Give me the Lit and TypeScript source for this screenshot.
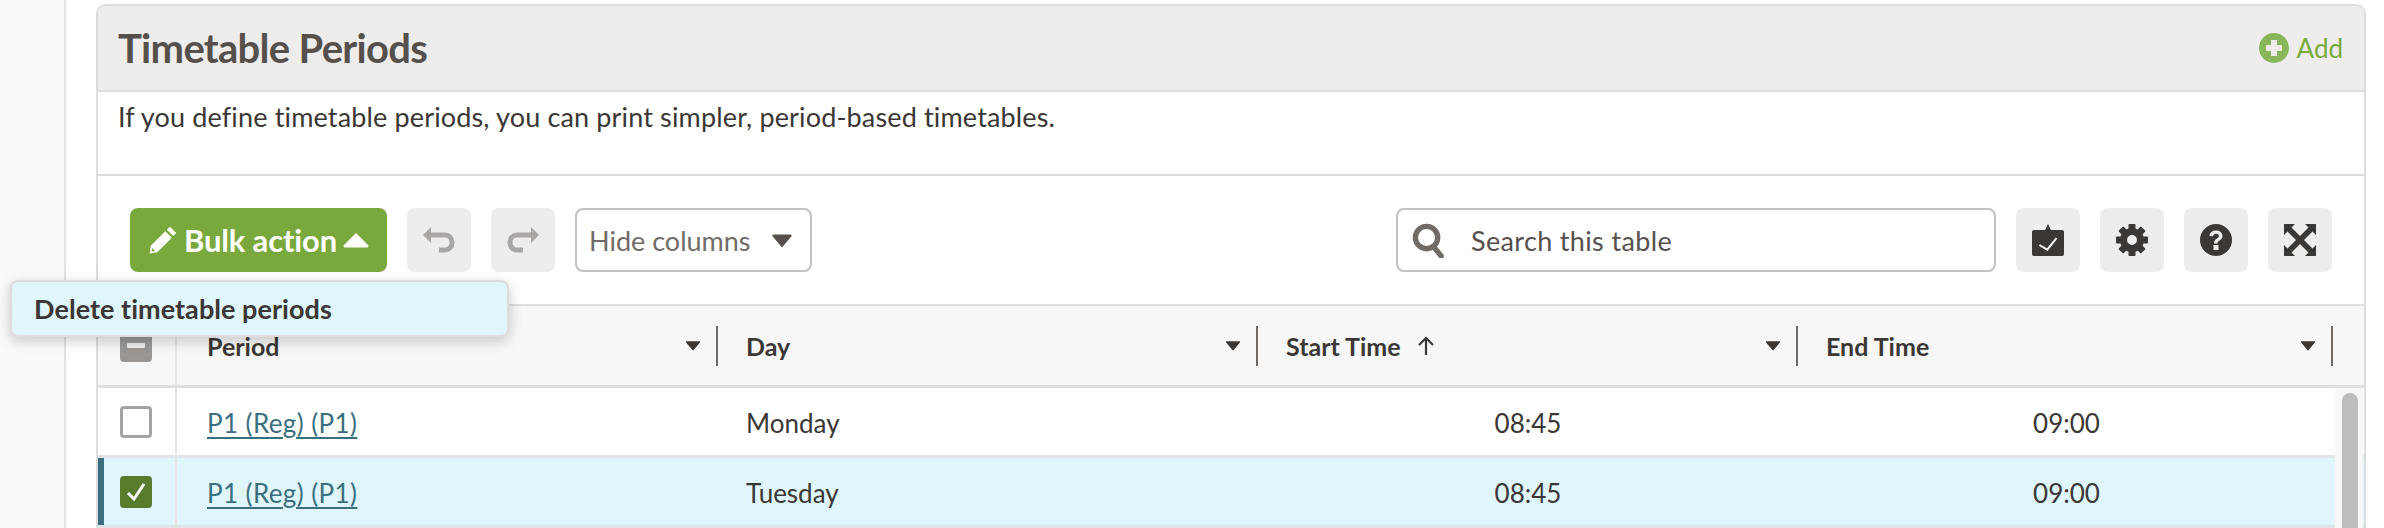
import { LitElement, html, css, svg } from "lit";
import { customElement } from "lit/decorators.js";

const caretDown = html`<svg class="caret" viewBox="0 0 20 14"><path d="M2 1.500h16a1 1 0 0 1 .8 1.600l-8 9.600a1 1 0 0 1-1.600 0l-8-9.600A1 1 0 0 1 2 1.500z"/></svg>`;
const gearTeeth = [0, 45, 90, 135, 180, 225, 270, 315].map(
  (a) => svg`<rect x="14.500" y="2" width="7" height="8" rx="1" fill="#3b3735" transform="rotate(${a} 18 18)"/>`
);

@customElement("app-root")
export class AppRoot extends LitElement {
  static styles = css`
    :host { display: flex; width: 2384px; height: 528px; overflow: hidden; background: #fff; font-family: "Lato", "Open Sans", sans-serif; color: #3b3735; position: relative; }
    .side { width: 64px; flex: none; background: #fafafa; border-right: 2px solid #e2e1e0; }
    .main { flex: none; width: 2270px; margin-left: 30px; padding-top: 4px; }
    .card { width: 2270px; box-sizing: border-box; border: 2px solid #dedddc; border-bottom: none; border-radius: 10px 10px 0 0; height: 524px; overflow: hidden; }
    .head { height: 86px; box-sizing: border-box; background: #eeedec; border-bottom: 2px solid #dedddc; display: flex; align-items: center; justify-content: space-between; padding: 0 21px 0 20px; }
    h2 { margin: 0; font-size: 40px; font-weight: 700; color: #56504d; letter-spacing: -0.7px; }
    .add { display: flex; align-items: center; gap: 8px; color: #7aaa3e; font-size: 26px; }
    .add svg { width: 30px; height: 30px; }
    .desc { height: 84px; box-sizing: border-box; border-bottom: 2px solid #dedddc; padding: 7px 20px 0; font-size: 27px; letter-spacing: 0.15px; line-height: 36px; }
    .bar { height: 130px; box-sizing: border-box; padding: 32px 32px 0; display: flex; gap: 20px; border-bottom: 2px solid #e0dfde; }
    .bulk { width: 257px; height: 64px; box-sizing: border-box; background: #79a93d; color: #fff; border-radius: 8px; display: flex; align-items: center; justify-content: center; gap: 6px; font-size: 31px; font-weight: 700; letter-spacing: -0.15px; }
    .bulk .pen { width: 30px; height: 30px; }
    .bulk .up { width: 26px; height: 16px; fill: #fff; }
    .ib { width: 64px; height: 64px; flex: none; background: #eeedec; border-radius: 8px; display: flex; align-items: center; justify-content: center; }
    .ib svg { width: 36px; height: 36px; }
    .ib.off svg { color: #aaa6a4; }
    .sel { width: 237px; height: 64px; box-sizing: border-box; border: 2px solid #c3c2c1; border-radius: 8px; display: flex; align-items: center; justify-content: space-between; padding: 0 17px 0 12px; font-size: 27px; color: #716b68; }
    .sel .caret { width: 22px; height: 15px; fill: #56504d; }
    .search { width: 600px; height: 64px; margin-left: auto; box-sizing: border-box; border: 2px solid #c3c2c1; border-radius: 8px; display: flex; align-items: center; gap: 26px; padding: 0 14px; font-size: 27px; letter-spacing: 0.35px; color: #56504d; }
    .search svg { width: 33px; height: 35px; flex: none; }
    .tools { display: flex; gap: 20px; }
    .row { display: grid; grid-template-columns: 79px 541px 540px 540px 535px 1fr; }
    .thead { height: 82px; box-sizing: border-box; background: #f7f7f7; border-bottom: 3px solid #e0dfde; font-size: 25px; font-weight: 700; align-items: center; }
    .thead > div { height: 100%; box-sizing: border-box; display: flex; align-items: center; }
    .th { padding: 0 0 0 28px; gap: 14px; }
    .th.first { padding-left: 30px; }
    .th .sp { flex: 1; }
    .th .caret { width: 16px; height: 11px; fill: #3b3735; margin-right: 1px; }
    .th .rule { width: 2px; height: 40px; background: #716b68; }
    .arr { width: 22px; height: 22px; }
    .cbc { justify-content: center; border-right: 2px solid #e6e5e4; padding-right: 2px; }
    .cb { width: 32px; height: 32px; box-sizing: border-box; border-radius: 4px; display: flex; align-items: center; justify-content: center; }
    .cb.part { background: #9a9795; }
    .cb.part i { width: 18px; height: 5px; background: #eee; border-radius: 1px; }
    .cb.empty { border: 3px solid #a5a3a2; background: #fff; }
    .cb.on { background: #567c2c; }
    .cb svg { width: 26px; height: 26px; }
    .tr { height: 70px; box-sizing: border-box; border-bottom: 3px solid #e0e4e8; font-size: 26px; align-items: center; }
    .tr > div { height: 100%; display: flex; align-items: center; box-sizing: border-box; }
    .tr .cell { padding: 2px 0 0 28px; }
    .tr .cell.first { padding-left: 30px; }
    .tr .num { justify-content: center; padding-top: 2px; }
    .tr .num.end { padding-left: 2px; }
    .tr.sel-row { background: #dff6fd; box-shadow: inset 6px 0 0 #3a6f7f; }
    a { color: #3a6f7f; text-decoration: underline; text-underline-offset: 4px; letter-spacing: 0.4px; }
    .body { position: relative; }
    .track { position: absolute; top: 0; right: 1px; bottom: 0; width: 28px; background: #f7f7f7; }
    .thumb { position: absolute; top: 5px; left: 7px; bottom: -20px; width: 16px; background: #bdbdbd; border-radius: 8px; }
    .menu { position: absolute; left: 10px; top: 280px; width: 499px; height: 57px; box-sizing: border-box; background: #dff6fd; border: 2px solid #dedddc; border-radius: 8px; box-shadow: 0 4px 14px rgba(0,0,0,.2); padding: 0 22px; display: flex; align-items: center; font-size: 27px; font-weight: 700; letter-spacing: 0.05px; }
  `;

  private tr(day: string, sel: boolean) {
    return html`<div class="row tr ${sel ? "sel-row" : ""}">
      <div class="cbc"><span class="cb ${sel ? "on" : "empty"}">${sel ? html`<svg viewBox="0 0 26 26"><path d="M5 14l6 6L21 5" fill="none" stroke="#fff" stroke-width="3"/></svg>` : ""}</span></div>
      <div class="cell first"><a>P1 (Reg) (P1)</a></div>
      <div class="cell">${day}</div>
      <div class="num">08:45</div>
      <div class="num end">09:00</div>
      <div></div>
    </div>`;
  }

  private th(label: string, sort = false, first = false) {
    return html`<div class="th ${first ? "first" : ""}"><span>${label}</span>${sort ? html`<svg class="arr" viewBox="0 0 22 22"><path d="M11 20V3M4 10l7-7 7 7" fill="none" stroke="#3b3735" stroke-width="2.200"/></svg>` : ""}<span class="sp"></span>${caretDown}<span class="rule"></span></div>`;
  }

  render() {
    return html`
      <div class="side"></div>
      <div class="main"><div class="card">
        <div class="head"><h2>Timetable Periods</h2>
          <div class="add"><svg viewBox="0 0 30 30"><circle cx="15" cy="15" r="15" fill="#8ab65a"/><path d="M15 7v16M7 15h16" stroke="#eeedec" stroke-width="6"/></svg>Add</div></div>
        <div class="desc">If you define timetable periods, you can print simpler, period-based timetables.</div>
        <div class="bar">
          <div class="bulk">
            <svg class="pen" viewBox="0 0 26 26"><path fill="#fff" d="M19 1.500l5.500 5.500-2.600 2.600-5.500-5.500zM15 5.400l5.600 5.600L8 23.600l-6.500 1 .9-6.600z"/><path fill="#79a93d" d="M3.500 20l2.600 2.600-3 .5z"/></svg>
            <span>Bulk action</span>
            <svg class="up" viewBox="0 0 26 16"><path d="M13 1l12 12a1.400 1.400 0 0 1-1 2.400H2A1.400 1.400 0 0 1 1 13z"/></svg>
          </div>
          <div class="ib off"><svg viewBox="0 0 36 36"><path d="M2 13l8-8v16z" fill="currentColor"/><path d="M8 13h16a7 7 0 0 1 7 7v1a7 7 0 0 1-7 7h-6" fill="none" stroke="currentColor" stroke-width="5"/></svg></div>
          <div class="ib off"><svg viewBox="0 0 36 36"><path d="M34 13l-8-8v16z" fill="currentColor"/><path d="M28 13H12a7 7 0 0 0-7 7v1a7 7 0 0 0 7 7h6" fill="none" stroke="currentColor" stroke-width="5"/></svg></div>
          <div class="sel"><span>Hide columns</span>${caretDown}</div>
          <div class="search">
            <svg viewBox="0 0 34 36"><circle cx="15" cy="15" r="11.500" fill="none" stroke="#716b68" stroke-width="5.500"/><path d="M22 24l8 10" stroke="#716b68" stroke-width="5.500" stroke-linecap="round"/></svg>
            <span>Search this table</span>
          </div>
          <div class="tools">
            <div class="ib"><svg viewBox="0 0 36 36"><path fill="#3b3735" d="M2 10a2 2 0 0 1 2-2h11l3-6 3 6h11a2 2 0 0 1 2 2v22a2 2 0 0 1-2 2H4a2 2 0 0 1-2-2z"/><path d="M9.300 23l8 4.700L26.600 16" fill="none" stroke="#fff" stroke-width="2"/></svg></div>
            <div class="ib"><svg viewBox="0 0 36 36">${gearTeeth}<circle cx="18" cy="18" r="8.500" fill="none" stroke="#3b3735" stroke-width="7"/></svg></div>
            <div class="ib"><svg viewBox="0 0 36 36"><circle cx="18" cy="18" r="16" fill="#3b3735"/><path d="M11.500 14c0-3.500 3-5.500 6.500-5.500s6.500 2 6.500 5.500c0 4.500-5 4-5 7.500h-3.500c0-5 5-5 5-7.500 0-1.300-1.300-2.200-3-2.200s-3 1-3 2.500z" fill="#eeedec"/><rect x="15.500" y="23" width="5" height="5" fill="#eeedec"/></svg></div>
            <div class="ib"><svg viewBox="0 0 36 36"><path fill="#3b3735" d="M2 2h11l-3.500 3.500L18 14l8.500-8.500L23 2h11v11l-3.500-3.500L22 18l8.500 8.500L34 23v11H23l3.500-3.500L18 22l-8.500 8.500L13 34H2V23l3.500 3.500L14 18 5.500 9.500 2 13z"/></svg></div>
          </div>
        </div>
        <div class="row thead">
          <div class="cbc"><span class="cb part"><i></i></span></div>
          ${this.th("Period", false, true)}${this.th("Day")}${this.th("Start Time", true)}${this.th("End Time")}
          <div></div>
        </div>
        <div class="body">
          ${this.tr("Monday", false)}
          ${this.tr("Tuesday", true)}
          <div class="track"><div class="thumb"></div></div>
        </div>
      </div></div>
      <div class="menu">Delete timetable periods</div>
    `;
  }
}
